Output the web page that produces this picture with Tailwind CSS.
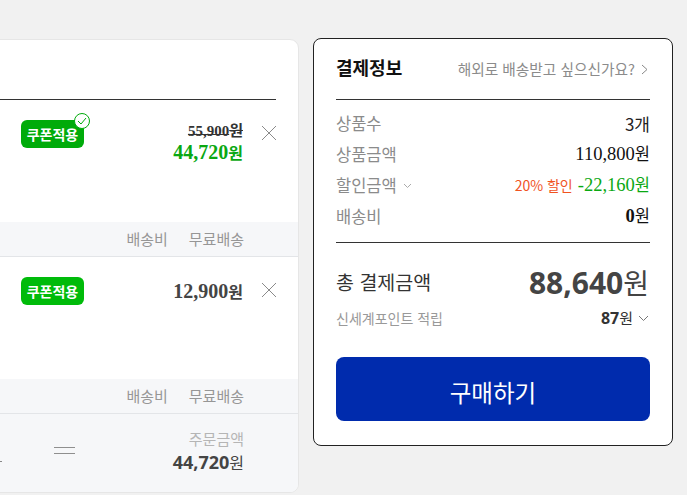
<!DOCTYPE html><html lang="ko">
<head>
  <meta charset="UTF-8" />
  <meta name="viewport" content="width=device-width, initial-scale=1" />
  <title>장바구니</title>
  <script src="https://cdn.jsdelivr.net/npm/@tailwindcss/browser@4"></script>
</head>
<body class="m-0 h-[495px] overflow-hidden bg-[#f1f1f1] font-['Noto_Sans_CJK_KR',sans-serif]">
  <div class="flex items-start gap-[14px] pt-[38px] ml-[-12px] w-[699px]">

    <!-- cart -->
    <div class="w-[311px] h-[454px] mt-px bg-white rounded-[9px] border border-[#e6e6e6] overflow-hidden flex flex-col shrink-0">
      <div class="h-[60px] border-b border-[#333] mr-[22px]"></div>

      <div class="h-[122px] flex items-start pl-[32px] pr-[21px] pt-[20px]">
        <div class="relative">
          <span class="flex items-center justify-center w-[63px] h-[28px] rounded-[6px] bg-[#00ab0a] text-white text-[14px] font-bold">쿠폰적용</span>
          <span class="absolute right-[-6px] top-[-7px] w-[16px] h-[16px] rounded-full bg-white border border-[#00ab0a] flex items-center justify-center">
            <svg width="10" height="8" viewBox="0 0 10 8" fill="none" stroke="#00ab0a"><path d="M1 4l3 3 5-6"/></svg>
          </span>
        </div>
        <div class="ml-auto mr-[18px] text-right">
          <div class="text-[15px] leading-[20px] text-[#333] line-through font-bold"><span class="font-['Liberation_Serif',serif]">55,900</span>원</div>
          <div class="text-[16px] leading-[24px] mt-[-1px] text-[#0aa812] font-bold"><span class="font-['Liberation_Serif',serif] text-[20px]">44,720</span>원</div>
        </div>
        <svg class="mt-[5px]" width="16" height="16" viewBox="0 0 16 16" stroke="#8a8a8a" fill="none"><path d="M1 1l14 14M15 1L1 15"/></svg>
      </div>

      <div class="h-[35px] bg-[#f6f7f9] border-b border-[#e3e5e8] flex items-center justify-end gap-[21px] pr-[54px] text-[15px] text-[#969696]">
        <span>배송비</span><span>무료배송</span>
      </div>

      <div class="h-[122px] flex items-start pl-[32px] pr-[21px] pt-[20px]">
        <span class="flex items-center justify-center w-[63px] h-[28px] rounded-[6px] bg-[#00bb0a] text-white text-[14px] font-bold">쿠폰적용</span>
        <div class="ml-auto mr-[18px] text-[16px] leading-[28px] text-[#444] font-bold"><span class="font-['Liberation_Serif',serif] text-[20px]">12,900</span>원</div>
        <svg class="mt-[5px]" width="16" height="16" viewBox="0 0 16 16" stroke="#8a8a8a" fill="none"><path d="M1 1l14 14M15 1L1 15"/></svg>
      </div>

      <div class="h-[35px] bg-[#f6f7f9] border-b border-[#e3e5e8] flex items-center justify-end gap-[21px] pr-[54px] text-[15px] text-[#969696]">
        <span>배송비</span><span>무료배송</span>
      </div>

      <div class="flex-1 bg-[#f6f7f9] flex items-start pr-[54px] relative">
        <span class="w-[4px] h-px bg-[#888] ml-[9px] mt-[47px]"></span>
        <div class="ml-[52px] mt-[33px] w-[21px] h-[7px] border-y border-[#8f8f8f]"></div>
        <div class="ml-auto text-right mt-[15px]">
          <div class="text-[15px] leading-[20px] text-[#b5b5b5]">주문금액</div>
          <div class="text-[16px] leading-[24px] mt-[1px] text-[#444]"><span class="font-['Open_Sans',sans-serif] font-bold text-[18px]">44,720</span>원</div>
        </div>
      </div>
    </div>

    <!-- summary -->
    <div class="w-[360px] h-[408px] bg-white rounded-[8px] border border-[#222] px-[22px] shrink-0">
      <div class="h-[61px] flex items-center border-b border-[#333]">
        <span class="text-[18px] font-bold text-[#111] mt-[-3px]">결제정보</span>
        <span class="ml-auto text-[14.7px] text-[#8b8b8b]">해외로 배송받고 싶으신가요?</span>
        <svg class="ml-[6px] mr-[2px]" width="7" height="11" viewBox="0 0 7 11" fill="none" stroke="#888"><path d="M1 1l5 4.5L1 10"/></svg>
      </div>

      <div class="h-[143px] border-b border-[#333] pt-[8px] text-[16.5px] text-[#8b8b8b]">
        <div class="flex justify-between items-center h-[31px]"><span>상품수</span><span class="text-[#222] text-[17px]">3개</span></div>
        <div class="flex justify-between items-center h-[31px]"><span>상품금액</span><span class="text-[#111] text-[16.5px]"><span class="font-['Liberation_Serif',serif] text-[18.5px]">110,800</span>원</span></div>
        <div class="flex items-center h-[31px]">
          <span>할인금액</span>
          <svg class="ml-[6px]" width="9" height="6" viewBox="0 0 9 6" fill="none" stroke="#aaa"><path d="M1 1l3.5 3.5L8 1"/></svg>
          <span class="ml-auto text-[14px] text-[#f0531f]">20% 할인</span>
          <span class="ml-[5px] text-[#0aa812] text-[16.5px]"><span class="font-['Liberation_Serif',serif] text-[18.5px]">-22,160</span>원</span>
        </div>
        <div class="flex justify-between items-center h-[31px]"><span>배송비</span><span class="text-[#111] text-[16.5px]"><span class="font-['Liberation_Serif',serif] text-[18.5px] font-bold">0</span>원</span></div>
      </div>

      <div class="flex items-center h-[40px] mt-[19px]">
        <span class="text-[19.5px] text-[#333]">총 결제금액</span>
        <span class="ml-auto text-[28px] text-[#444] mr-[1px]"><span class="font-['Open_Sans',sans-serif] font-bold text-[30px]">88,640</span>원</span>
      </div>
      <div class="flex items-center h-[20px] mt-[6px]">
        <span class="text-[14px] text-[#999]">신세계포인트 적립</span>
        <span class="ml-auto text-[15px] text-[#333]"><span class="font-['Open_Sans',sans-serif] font-bold text-[16px]">87</span>원</span>
        <svg class="ml-[5px] mr-[1px]" width="11" height="7" viewBox="0 0 11 7" fill="none" stroke="#777"><path d="M1 1l4.5 4.5L10 1"/></svg>
      </div>

      <button class="mt-[29px] w-full h-[64px] pt-[7px] rounded-[8px] bg-[#002bad] text-white text-[23.5px]">구매하기</button>
    </div>

  </div>
</body>
</html>
